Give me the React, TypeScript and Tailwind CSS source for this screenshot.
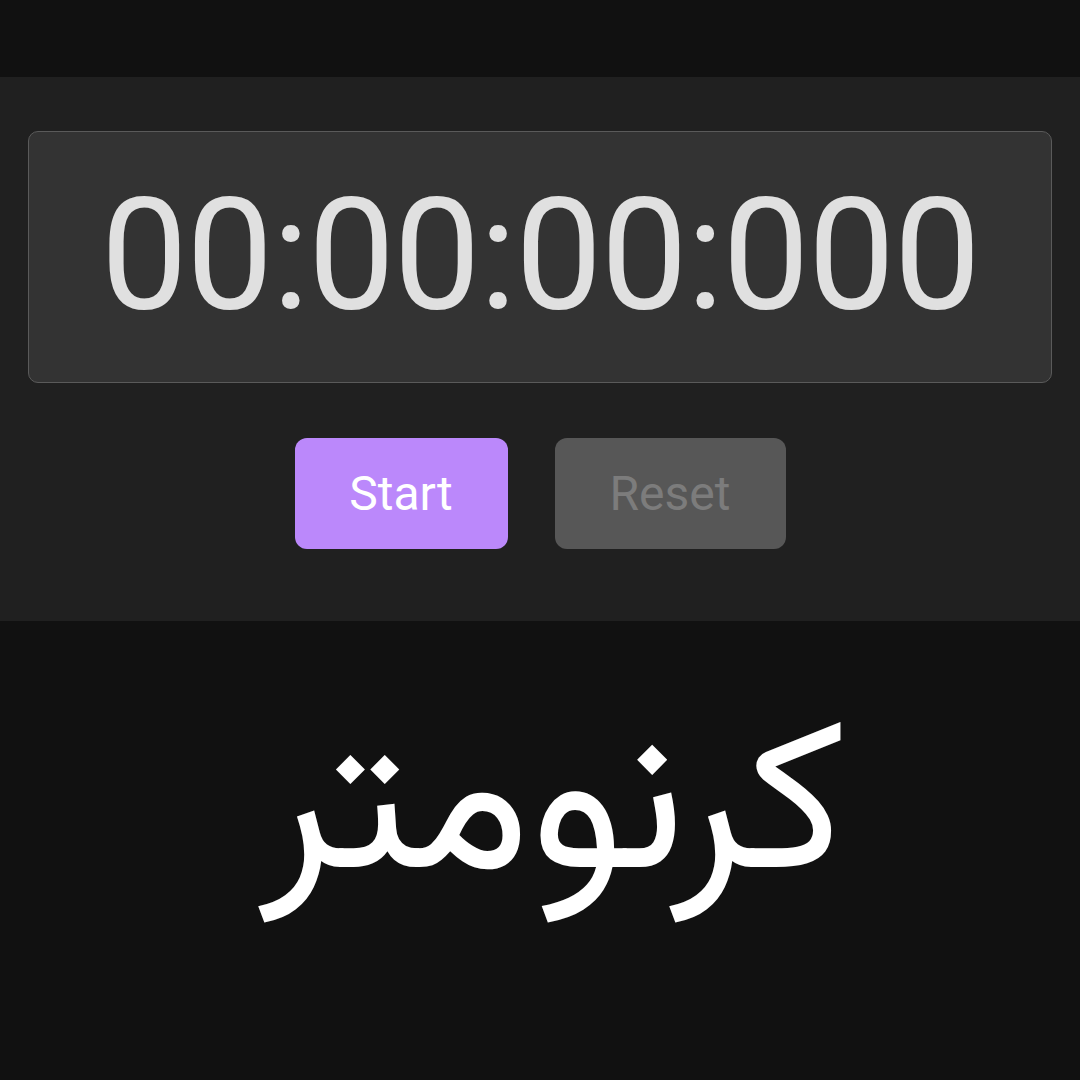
export default function App() {
    return (
        <div className="min-h-screen w-[1080px] h-[1080px] bg-[#111111] flex flex-col overflow-hidden" style={{ fontFamily: 'Roboto, sans-serif' }}>
            <div className="h-[77px]" />
            <div className="bg-[#202020] px-[28px] pt-[54px] pb-[72px] flex flex-col items-center">
                <div className="w-full h-[252px] bg-[#333333] border border-[#5a5a5a] rounded-[10px] flex items-center justify-center">
                    <span className="text-[#e0e0e0] text-[155px] leading-none font-normal tracking-[-1.5px] translate-y-[-2px]">00:00:00:000</span>
                </div>
                <div className="flex gap-[47px] mt-[55px]">
                    <button className="w-[213px] h-[111px] rounded-[12px] bg-[#bb88fb] text-white text-[48px] font-normal">
                        Start
                    </button>
                    <button className="w-[231px] h-[111px] rounded-[12px] bg-[#575757] text-[#7c7c7c] text-[48px] font-normal">
                        Reset
                    </button>
                </div>
            </div>
            <div className="flex-1 flex items-start justify-center pt-[89px]">
                <h1 dir="rtl" className="text-white text-[212px] leading-none ml-[26px]" style={{ fontFamily: 'Vazirmatn, sans-serif' }}>
                    کرنومتر
                </h1>
            </div>
        </div>
    )
}
